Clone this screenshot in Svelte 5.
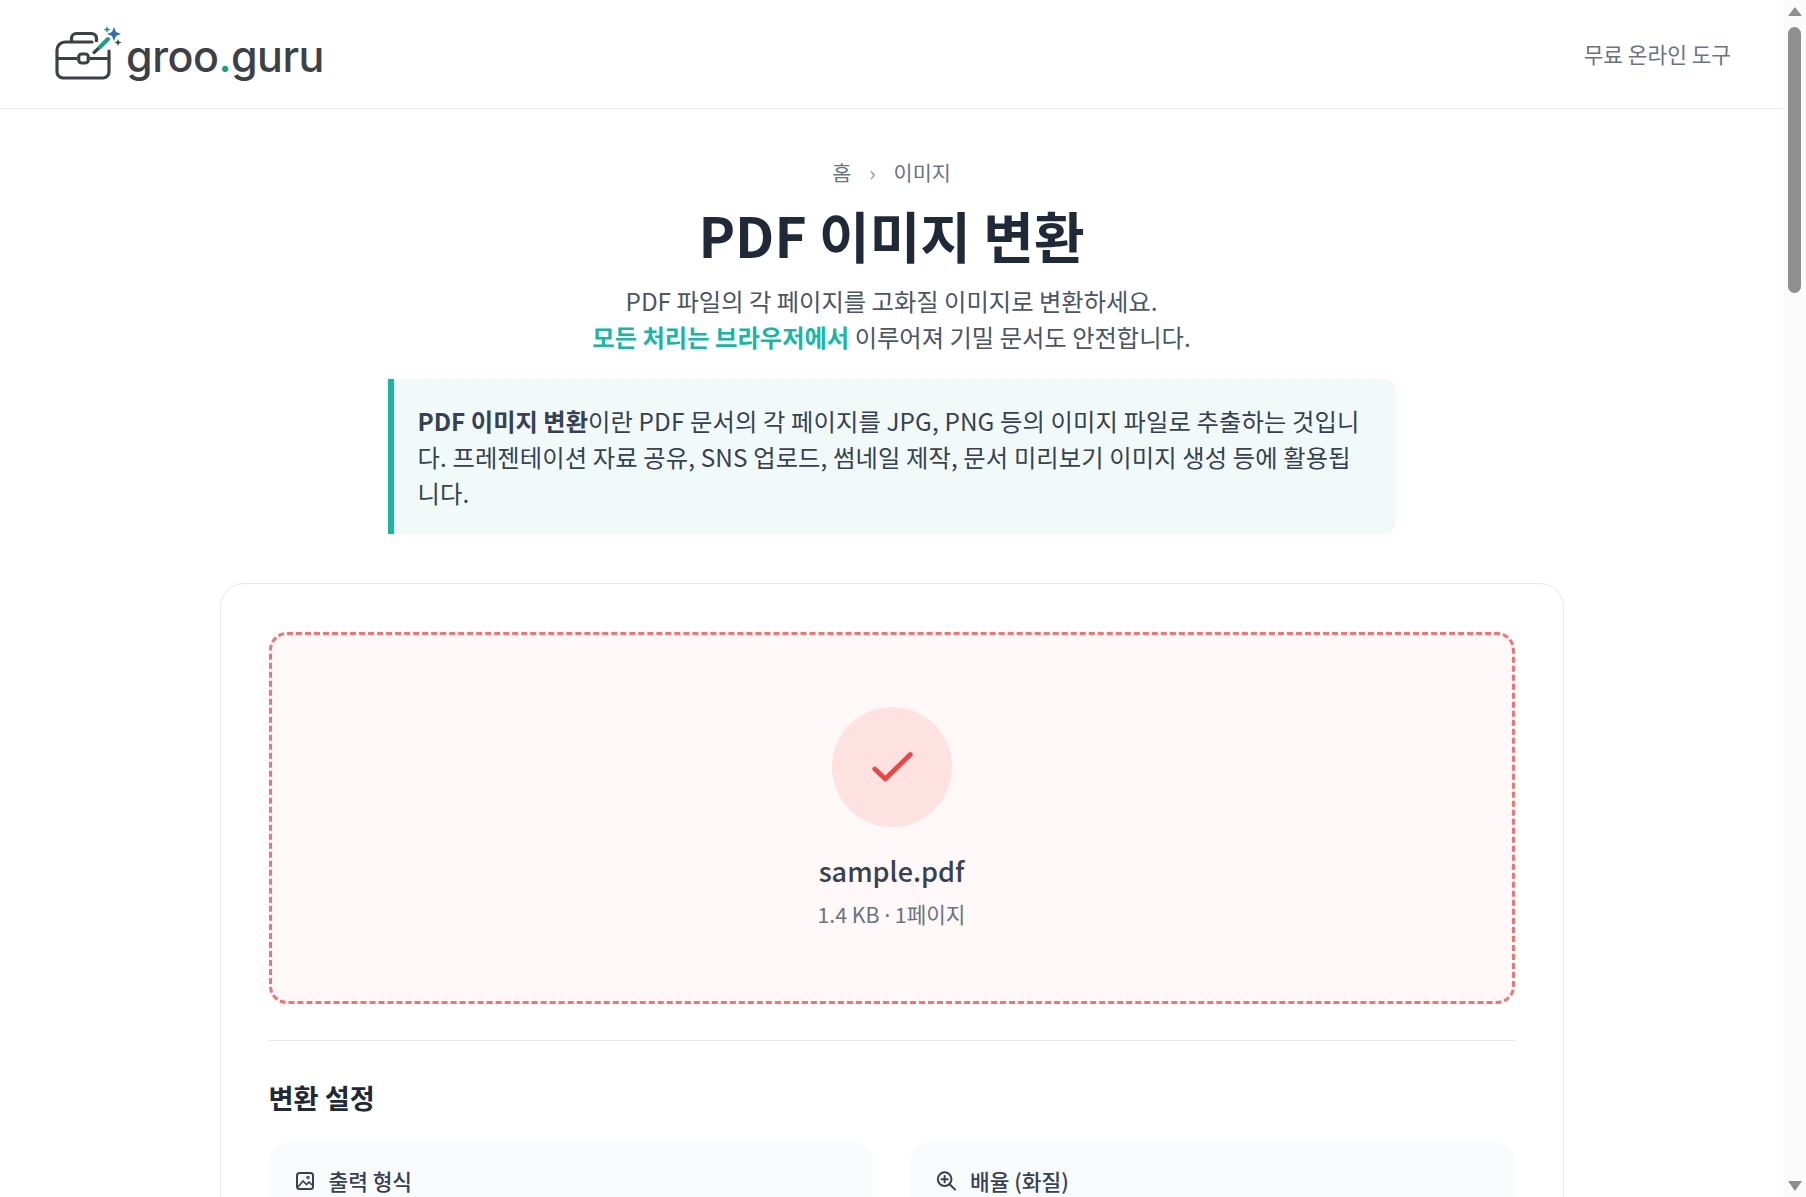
<script>
  const crumbs = ['홈', '이미지']
  const file = { name: 'sample.pdf', size: '1.4 KB', pages: '1페이지' }
</script>

<div class="Page">
  <div class="Content">
    <header class="Header">
      <a class="Logo" href="#home">
        <svg class="LogoMark" width="74" height="60" viewBox="0 0 74 60" fill="none">
          <path d="M19.500 19v-3.500a5 5 0 0 1 5-5h15a5 5 0 0 1 5 5v3.500" stroke="#3c4148" stroke-width="3.200" />
          <path d="M40 19H13a8 8 0 0 0-8 8v22a6 6 0 0 0 6 6h40a6 6 0 0 0 6-6V28" stroke="#3c4148" stroke-width="3.200" stroke-linecap="round" />
          <path d="M5 35.500h20M38 35.500h19" stroke="#3c4148" stroke-width="3.200" />
          <rect x="26.700" y="31" width="9.600" height="9" rx="3" stroke="#3c4148" stroke-width="3.200" />
          <path d="M42 29.500l6-5.500" stroke="#3c4148" stroke-width="3.200" stroke-linecap="round" />
          <path d="M48 24l8-8" stroke="#16a085" stroke-width="4" stroke-linecap="round" />
          <path d="M62 4l2 5 5 2-5 2-2 5-2-5-5-2 5-2z" fill="#2f6fab" />
          <path d="M55 3l1 2.500 2.500 1-2.500 1-1 2.500-1-2.500-2.500-1 2.500-1z" fill="#16a085" />
          <path d="M66 16l1 2.500 2.500 1-2.500 1-1 2.500-1-2.500-2.500-1 2.500-1z" fill="#3c4148" />
        </svg>
        <span class="LogoText">groo<span class="LogoDot">.</span>guru</span>
      </a>
      <span class="Tagline">무료 온라인 도구</span>
    </header>

    <main class="Main">
      <nav class="Breadcrumb">
        <span>{crumbs[0]}</span>
        <span class="Sep">›</span>
        <span>{crumbs[1]}</span>
      </nav>
      <h1 class="Title">PDF 이미지 변환</h1>
      <p class="Lead">
        PDF 파일의 각 페이지를 고화질 이미지로 변환하세요.<br />
        <strong>모든 처리는 브라우저에서</strong> 이루어져 기밀 문서도 안전합니다.
      </p>
      <p class="Info">
        <strong>PDF 이미지 변환</strong>이란 PDF 문서의 각 페이지를 JPG, PNG 등의 이미지 파일로 추출하는 것입니다. 프레젠테이션 자료 공유, SNS 업로드, 썸네일 제작, 문서 미리보기 이미지 생성 등에 활용됩니다.
      </p>

      <section class="Card">
        <div class="Drop">
          <div class="Check">
            <svg width="44" height="44" viewBox="0 0 44 44" fill="none">
              <path d="M4.800 24L15.300 34 40.300 9.500" stroke="#ef4444" stroke-width="4.800" stroke-linecap="round" stroke-linejoin="round" />
            </svg>
          </div>
          <div class="FileName">{file.name}</div>
          <div class="FileMeta">{file.size} <span class="Dot">·</span> {file.pages}</div>
        </div>

        <hr class="Divider" />

        <h2 class="Settings">변환 설정</h2>
        <div class="Panels">
          <div class="Panel">
            <label class="PanelLabel" for="format">
              <svg width="20" height="20" viewBox="0 0 20 20" fill="none" stroke="#374151" stroke-width="2">
                <rect x="2" y="2" width="16" height="16" rx="2.500" />
                <path d="M3 16l5-6 3.500 3.500L14 11l3 3" stroke-width="1.600" />
                <circle cx="13" cy="6.500" r="1.200" stroke-width="1.200" />
              </svg>
              <span id="format">출력 형식</span>
            </label>
          </div>
          <div class="Panel">
            <label class="PanelLabel" for="scale">
              <svg width="20" height="20" viewBox="0 0 22 22" fill="none" stroke="#374151" stroke-width="2.200" stroke-linecap="round">
                <circle cx="9.500" cy="9" r="7.500" />
                <path d="M15 14.500l6 6" />
                <path d="M9.500 5.500v7M6 9h7" />
              </svg>
              <span id="scale">배율 (화질)</span>
            </label>
          </div>
        </div>
      </section>
    </main>
  </div>

  <div class="Scrollbar">
    <span class="Arrow up"></span>
    <span class="Thumb"></span>
    <span class="Arrow down"></span>
  </div>
</div>

<style>
  :global(body) {
    overflow: hidden;
    background: #fff;
  }
  .Page {
    display: flex;
    height: 100vh;
    overflow: hidden;
    font-family: 'Noto Sans CJK KR', 'Noto Sans', sans-serif;
  }
  .Content {
    flex: 1 1 auto;
    min-width: 0;
    overflow: hidden;
  }

  .Header {
    height: 109px;
    box-sizing: border-box;
    border-bottom: 1px solid #e5e7eb;
    padding: 0 52px;
    display: flex;
    align-items: center;
    justify-content: space-between;
  }
  .Logo {
    display: flex;
    align-items: center;
    gap: 1px;
    color: #3c4148;
    text-decoration: none;
  }
  .LogoMark {
    flex: none;
    margin-top: -3px;
  }
  .LogoText {
    font-family: Inter, sans-serif;
    font-size: 43px;
    font-weight: 500;
    line-height: 1;
    letter-spacing: -0.5px;
    margin-top: 5px;
    margin-left: -1px;
  }
  .LogoDot {
    color: #16a085;
  }
  .Tagline {
    font-size: 21.400px;
    color: #6b7280;
    margin-top: -1px;
  }

  .Main {
    display: flex;
    flex-direction: column;
    align-items: center;
    padding-top: 46px;
  }
  .Breadcrumb {
    display: flex;
    gap: 18px;
    font-size: 20.700px;
    line-height: 34px;
    color: #6b7280;
  }
  .Sep {
    color: #8b93a0;
  }
  .Title {
    margin: 7px 0 0;
    font-size: 55px;
    line-height: 76px;
    font-weight: 700;
    color: #1f2937;
  }
  .Lead {
    margin: 11px 0 0;
    font-size: 24.300px;
    line-height: 36px;
    text-align: center;
    color: #4b5563;
  }
  .Lead strong {
    color: #14b8a6;
    font-weight: 700;
  }
  .Info {
    box-sizing: border-box;
    width: 1008px;
    margin: 24px 0 0;
    padding: 24px 34px 23px 24px;
    border-left: 6px solid #14b8a6;
    border-radius: 0 12px 12px 0;
    background: #f1faf8;
    font-size: 24.300px;
    line-height: 36px;
    letter-spacing: 0.12px;
    color: #374151;
  }
  .Info strong {
    font-weight: 700;
    letter-spacing: 0;
  }

  .Card {
    box-sizing: border-box;
    width: 1344px;
    margin-top: 49px;
    padding: 48px;
    border: 1px solid #e5e7eb;
    border-radius: 24px;
    background: #fff;
  }
  .Drop {
    box-sizing: border-box;
    height: 372px;
    padding-top: 72px;
    border: 3px dashed #f87171;
    border-radius: 18px;
    background: #fef8f8;
    display: flex;
    flex-direction: column;
    align-items: center;
  }
  .Check {
    width: 120px;
    height: 120px;
    border-radius: 50%;
    background: #fee2e2;
    display: flex;
    align-items: center;
    justify-content: center;
  }
  .FileName {
    margin-top: 24px;
    font-size: 27px;
    line-height: 40px;
    font-weight: 500;
    color: #374151;
  }
  .FileMeta {
    margin-top: 8px;
    font-size: 21.300px;
    line-height: 30px;
    color: #6b7280;
  }
  .Dot {
    font-family: 'Noto Sans', sans-serif;
  }
  .Divider {
    margin: 36px 0 0;
    border: 0;
    border-top: 1px solid #e5e7eb;
  }
  .Settings {
    margin: 36px 0 0;
    font-size: 27.200px;
    line-height: 40px;
    font-weight: 700;
    color: #1f2937;
  }
  .Panels {
    display: grid;
    grid-template-columns: 1fr 1fr;
    gap: 37px;
    margin-top: 26px;
  }
  .Panel {
    height: 300px;
    padding: 23px 26px;
    border-radius: 18px;
    background: #f9fafb;
  }
  .PanelLabel {
    display: flex;
    align-items: center;
    gap: 14px;
    font-size: 21.400px;
    line-height: 30px;
    font-weight: 500;
    color: #374151;
  }

  .Scrollbar {
    flex: 0 0 23px;
    height: 100%;
    background: #fbfbfb;
    display: flex;
    flex-direction: column;
    align-items: center;
  }
  .Thumb {
    margin-top: 11px;
    width: 13px;
    height: 266px;
    border-radius: 7px;
    background: #8f8f8f;
  }
  .Arrow {
    width: 0;
    height: 0;
    border-left: 7.500px solid transparent;
    border-right: 7.500px solid transparent;
  }
  .Arrow.up {
    margin-top: 7px;
    border-bottom: 9px solid #8f8f8f;
  }
  .Arrow.down {
    margin-top: auto;
    margin-bottom: 6px;
    border-top: 10px solid #8f8f8f;
  }
</style>
